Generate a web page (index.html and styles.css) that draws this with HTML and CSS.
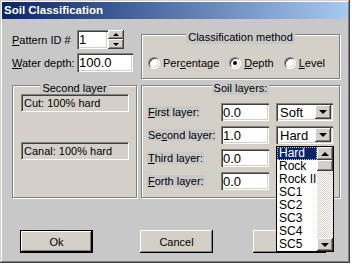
FILE: index.html
```html
<!DOCTYPE html>
<html lang="en">
<head>
  <meta charset="UTF-8" />
  <title>Soil Classification</title>
  <link rel="stylesheet" href="styles.css">
</head>
<body>

  <div class="window">
    <div class="titlebar">Soil Classification</div>

    <div class="content">
      <!-- Pattern / depth and method -->
      <div class="top">
        <div class="fields">
          <div class="field-row">
            <label class="lbl"><u>P</u>attern ID #</label>
            <input class="edit edit-id" value="1" />
            <div class="spin">
              <span class="spin-btn"><i class="tri tri-up"></i></span>
              <span class="spin-btn"><i class="tri tri-down"></i></span>
            </div>
          </div>
          <div class="field-row">
            <label class="lbl"><u>W</u>ater depth:</label>
            <input class="edit edit-depth" value="100.0" />
          </div>
        </div>

        <div class="group group-method">
          <div class="legend">Classification method</div>
          <div class="radios">
            <span class="radio-item"><span class="radio"></span><span>Per<u>c</u>entage</span></span>
            <span class="radio-item"><span class="radio checked"></span><span><u>D</u>epth</span></span>
            <span class="radio-item"><span class="radio"></span><span><u>L</u>evel</span></span>
          </div>
        </div>
      </div>

      <!-- Layers -->
      <div class="mid">
        <div class="group group-second">
          <div class="legend">Second layer</div>
          <div class="static static-cut">Cut: 100% hard</div>
          <div class="static static-canal">Canal: 100% hard</div>
        </div>

        <div class="group group-soil">
          <div class="legend">Soil layers:</div>
          <div class="layers">
            <div class="layer-row">
              <div class="lbl-wrap"><span class="lbl-bg"><u>F</u>irst layer:</span></div>
              <input class="edit edit-layer" value="0.0" />
              <div class="combo"><span class="combo-text">Soft</span><span class="combo-btn"><i class="tri tri-down"></i></span></div>
            </div>
            <div class="layer-row">
              <div class="lbl-wrap"><span class="lbl-bg">Se<u>c</u>ond layer:</span></div>
              <input class="edit edit-layer" value="1.0" />
              <div class="combo">
                <span class="combo-text">Hard</span><span class="combo-btn"><i class="tri tri-down"></i></span>
                <!-- open drop-down list -->
                <div class="dropdown">
                  <div class="items">
                    <div class="item selected">Hard</div>
                    <div class="item">Rock</div>
                    <div class="item">Rock II</div>
                    <div class="item">SC1</div>
                    <div class="item">SC2</div>
                    <div class="item">SC3</div>
                    <div class="item">SC4</div>
                    <div class="item">SC5</div>
                  </div>
                  <div class="scrollbar">
                    <span class="sb-btn"><i class="tri tri-up"></i></span>
                    <span class="sb-thumb"></span>
                    <span class="sb-track"></span>
                    <span class="sb-btn"><i class="tri tri-down"></i></span>
                  </div>
                </div>
              </div>
            </div>
            <div class="layer-row">
              <div class="lbl-wrap"><span class="lbl-bg"><u>T</u>hird layer:</span></div>
              <input class="edit edit-layer" value="0.0" />
            </div>
            <div class="layer-row">
              <div class="lbl-wrap"><span class="lbl-bg"><u>F</u>orth layer:</span></div>
              <input class="edit edit-layer" value="0.0" />
            </div>
          </div>
        </div>
      </div>

      <!-- Buttons (the third one is covered by the open list) -->
      <div class="buttons">
        <button class="btn btn-default">Ok</button>
        <button class="btn btn-cancel">Cancel</button>
        <button class="btn btn-help"></button>
      </div>
    </div>
  </div>

</body>
</html>
```

FILE: styles.css
```css
* {
  box-sizing: border-box;
}

body {
  margin: 0;
  background: #fff;
  font-family: "Liberation Sans", Arial, sans-serif;
  font-size: 11px;
  color: #000;
}

u {
  text-decoration-thickness: 1px;
  text-underline-offset: 1px;
}

.window {
  width: 350px;
  height: 263px;
  padding: 2px;
  background: #c8c8c8;
  box-shadow: inset -1px -1px #404040, inset 1px 1px #d4d0c8,
              inset -2px -2px #808080, inset 2px 2px #fff;
}

.titlebar {
  height: 17px;
  line-height: 17px;
  padding-left: 2px;
  background: linear-gradient(to right, #0a246a, #a6caf0);
  color: #fff;
  font-weight: bold;
  font-size: 11.5px;
}

.content {
  padding-left: 10px;
}

/* sunken edit box */
.edit {
  height: 19px;
  padding: 0 2px;
  border: none;
  background: #fff;
  font-family: "Liberation Sans", Arial, sans-serif;
  font-size: 13px;
  color: #000;
  box-shadow: inset 1px 1px #808080, inset 2px 2px #404040,
              inset -1px -1px #fff, inset -2px -2px #d4d0c8;
  outline: none;
}

/* top part */
.top {
  display: flex;
  margin-top: 11px;
}

.fields {
  width: 129px;
}

.field-row {
  display: flex;
  align-items: center;
  height: 19px;
}

.field-row + .field-row {
  margin-top: 4px;
}

.lbl {
  width: 65px;
}

.edit-id {
  width: 31px;
}

.edit-depth {
  width: 56px;
}

.spin {
  display: flex;
  flex-direction: column;
  width: 16px;
  height: 19px;
}

.spin-btn {
  display: flex;
  align-items: center;
  justify-content: center;
  height: 9px;
  background: #d4d0c8;
  box-shadow: inset -1px -1px #404040, inset 1px 1px #fff, inset -2px -2px #808080;
}

.spin-btn + .spin-btn {
  height: 10px;
}

.tri {
  display: block;
  width: 0;
  height: 0;
  border-left: 3px solid transparent;
  border-right: 3px solid transparent;
}

.tri-up {
  border-bottom: 3px solid #000;
}

.tri-down {
  border-top: 3px solid #000;
}

/* etched group box */
.group {
  background: #d4d0c8;
  border: 1px solid #808080;
  box-shadow: inset 1px 1px #fff, 1px 1px #fff;
}

.legend {
  width: fit-content;
  margin: -4px auto 0;
  padding: 0 2px;
  line-height: 13px;
  background: #c8c8c8;
}

.group-method {
  width: 199px;
  height: 45px;
  margin-top: 4px;
}

.radios {
  display: flex;
  align-items: center;
  gap: 10px;
  margin-top: 12px;
  padding-left: 6px;
}

.radio-item {
  display: flex;
  align-items: center;
  gap: 3px;
  height: 13px;
}

.radio {
  position: relative;
  width: 12px;
  height: 12px;
  border-radius: 50%;
  background: #fff;
  border: 1px solid;
  border-color: #808080 #fff #fff #808080;
  box-shadow: inset 1px 1px #404040, inset -1px -1px #d4d0c8;
}

.radio.checked::after {
  content: "";
  position: absolute;
  left: 3px;
  top: 3px;
  width: 4px;
  height: 4px;
  border-radius: 50%;
  background: #000;
}

/* middle part */
.mid {
  display: flex;
  margin-top: 6px;
}

.group-second {
  width: 125px;
  height: 113px;
  margin-right: 4px;
}

.group-soil {
  width: 199px;
  height: 113px;
}

.static {
  width: 108px;
  height: 18px;
  line-height: 16px;
  margin-left: 8px;
  padding-left: 2px;
  border: 1px solid;
  border-color: #808080 #fff #fff #808080;
  box-shadow: inset 1px 1px #404040;
}

.static-cut {
  margin-top: -1px;
}

.static-canal {
  margin-top: 30px;
}

.layers {
  margin-top: 8px;
  padding-left: 5px;
}

.layer-row {
  display: flex;
  align-items: center;
  height: 18px;
  margin-bottom: 5px;
}

.lbl-wrap {
  width: 74px;
}

.lbl-bg {
  background: #c8c8c8;
  padding: 0 1px;
  line-height: 12px;
  display: inline-block;
}

.edit-layer {
  width: 48px;
  height: 18px;
}

.combo {
  position: relative;
  display: flex;
  align-items: center;
  width: 57px;
  height: 18px;
  margin-left: 7px;
  background: #fff;
  font-size: 13px;
  box-shadow: inset 1px 1px #808080, inset 2px 2px #404040,
              inset -1px -1px #fff, inset -2px -2px #d4d0c8;
}

.combo-text {
  flex: 1;
  padding-left: 4px;
}

.combo-btn {
  display: flex;
  align-items: center;
  justify-content: center;
  width: 16px;
  height: 14px;
  margin-right: 2px;
  background: #d4d0c8;
  box-shadow: inset -1px -1px #404040, inset 1px 1px #fff, inset -2px -2px #808080;
}

.combo-btn .tri {
  border-left-width: 4px;
  border-right-width: 4px;
  border-top-width: 4px;
}

/* open list */
.dropdown {
  position: absolute;
  left: 0;
  top: 20px;
  z-index: 2;
  display: flex;
  width: 58px;
  height: 106px;
  border: 1px solid #000;
  background: #fff;
}

.items {
  width: 40px;
  overflow: hidden;
}

.item {
  height: 13px;
  line-height: 13px;
  padding-left: 2px;
  font-size: 12px;
  white-space: nowrap;
}

.item.selected {
  background: #0a246a;
  color: #fff;
  outline: 1px dotted #c8c8c8;
  outline-offset: -1px;
}

.scrollbar {
  display: flex;
  flex-direction: column;
  width: 16px;
}

.sb-btn {
  display: flex;
  align-items: center;
  justify-content: center;
  height: 13px;
  background: #d4d0c8;
  box-shadow: inset -1px -1px #404040, inset 1px 1px #fff, inset -2px -2px #808080;
}

.sb-btn .tri {
  border-left-width: 4px;
  border-right-width: 4px;
}

.sb-btn .tri-up {
  border-bottom-width: 4px;
}

.sb-btn .tri-down {
  border-top-width: 4px;
}

.sb-thumb {
  height: 11px;
  background: #d4d0c8;
  box-shadow: inset -1px -1px #404040, inset 1px 1px #fff, inset -2px -2px #808080;
}

.sb-track {
  flex: 1;
  background: repeating-conic-gradient(#fff 0 25%, #d4d0c8 0 50%) 0 0 / 2px 2px;
}

/* buttons */
.buttons {
  display: flex;
  margin-top: 32px;
  padding-left: 8px;
}

.btn {
  width: 73px;
  height: 23px;
  padding: 0;
  border: none;
  background: #d4d0c8;
  font-family: "Liberation Sans", Arial, sans-serif;
  font-size: 11px;
  color: #000;
  box-shadow: inset -1px -1px #000, inset 1px 1px #fff, inset -2px -2px #808080;
}

.btn-default {
  border: 1px solid #000;
}

.btn-cancel {
  margin-left: 47px;
}

.btn-help {
  margin-left: 40px;
}
```
